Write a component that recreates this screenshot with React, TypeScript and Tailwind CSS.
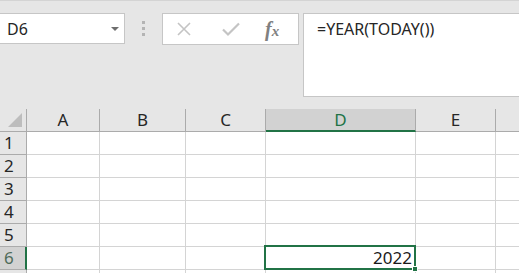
import React from "react";

const cols = [
  { name: "A", w: 73 },
  { name: "B", w: 86 },
  { name: "C", w: 80 },
  { name: "D", w: 150 },
  { name: "E", w: 80 },
  { name: "", w: 40 },
];

const rows = [1, 2, 3, 4, 5, 6, 7];

export default function App() {
  const font = { fontFamily: '"Noto Sans", "Open Sans", sans-serif' };
  return (
    <div
      className="w-[519px] h-[273px] overflow-hidden bg-[#e6e6e6] border-t border-[#d4d4d4] flex flex-col"
      style={font}
    >
      {/* Toolbar */}
      <div className="flex items-start pt-[12px] h-[96px] shrink-0">
        <div className="relative w-[126px] h-[31px] -ml-px bg-white border border-[#c6c6c6] flex items-center pl-[7px] text-[16px] text-[#262626]">
          D6
          <span className="absolute left-[111px] top-[13px] w-0 h-0 border-l-[4px] border-r-[4px] border-t-[4px] border-l-transparent border-r-transparent border-t-[#6e6e6e]" />
        </div>
        <div className="w-[37px] h-[31px] flex flex-col items-center justify-center gap-[3px]">
          <span className="w-[3px] h-[3px] bg-[#b4b4b4]" />
          <span className="w-[3px] h-[3px] bg-[#b4b4b4]" />
          <span className="w-[3px] h-[3px] bg-[#b4b4b4]" />
        </div>
        <div className="w-[137px] h-[32px] bg-white border border-[#c6c6c6] flex items-center">
          <svg width="16" height="16" viewBox="0 0 16 16" className="ml-[13px]">
            <path d="M2 2 L14 14 M14 2 L2 14" stroke="#c4c4c4" strokeWidth="1.6" fill="none" />
          </svg>
          <svg width="20" height="16" viewBox="0 0 20 16" className="ml-[29px]">
            <path d="M2 8.5 L7 13.5 L18 2.5" stroke="#c4c4c4" strokeWidth="2.2" fill="none" />
          </svg>
          <span
            className="ml-[24px] text-[20px] italic font-bold text-[#808080] leading-none"
            style={{ fontFamily: '"Liberation Serif", "DejaVu Serif", serif' }}
          >
            f<span className="text-[15px]">x</span>
          </span>
        </div>
        <div className="ml-[4px] flex-1 h-[84px] bg-white border border-[#c6c6c6] border-r-0 pl-[13px] pt-[3px] text-[16px] text-[#262626]">
          =YEAR(TODAY())
        </div>
      </div>

      {/* Grid */}
      <div className="mt-[12px] flex flex-col text-[#262626]">
        {/* header row */}
        <div className="flex h-[23px]">
          <div className="relative w-[27px] h-[23px] border-r border-b border-[#ababab] bg-[#e6e6e6] shrink-0">
            <svg width="27" height="23" className="absolute left-0 top-0">
              <polygon points="8,18 22,18 22,4" fill="#bdbdbd" />
            </svg>
          </div>
          {cols.map((c) => (
            <div
              key={c.name || "f"}
              className={
                c.name === "D"
                  ? "h-[23px] shrink-0 flex items-center justify-center text-[17px] text-[#217346] bg-[#d2d2d2] border-r border-[#ababab] border-b-2 border-b-[#217346]"
                  : "h-[23px] shrink-0 flex items-center justify-center text-[17px] bg-[#e6e6e6] border-r border-b border-[#ababab]"
              }
              style={{ width: c.w }}
            >
              {c.name}
            </div>
          ))}
        </div>
        {rows.map((r) => (
          <div key={r} className="flex h-[23px] shrink-0">
            <div
              className={
                r === 6
                  ? "w-[27px] h-[23px] shrink-0 flex items-center pl-[4px] text-[17px] text-[#4f6b5a] bg-[#d2d2d2] border-r-2 border-r-[#217346] border-b border-b-[#ababab]"
                  : "w-[27px] h-[23px] shrink-0 flex items-center pl-[4px] text-[17px] bg-[#e6e6e6] border-r border-b border-[#ababab]"
              }
            >
              {r < 7 ? r : ""}
            </div>
            {cols.map((c) => (
              <div
                key={c.name || "f"}
                className="relative h-[23px] shrink-0 bg-white border-r border-b border-[#d4d4d4]"
                style={{ width: c.w }}
              >
                {r === 6 && c.name === "D" && (
                  <div className="absolute left-[-2px] top-[-2px] w-[152px] h-[25px] border-2 border-[#217346] flex items-center justify-end pr-[2px] text-[17px] text-[#1a1a1a] z-10">
                    2022
                    <span className="absolute right-[-4px] bottom-[-4px] w-[6px] h-[6px] bg-[#217346] border border-white" />
                  </div>
                )}
              </div>
            ))}
          </div>
        ))}
      </div>
    </div>
  );
}
